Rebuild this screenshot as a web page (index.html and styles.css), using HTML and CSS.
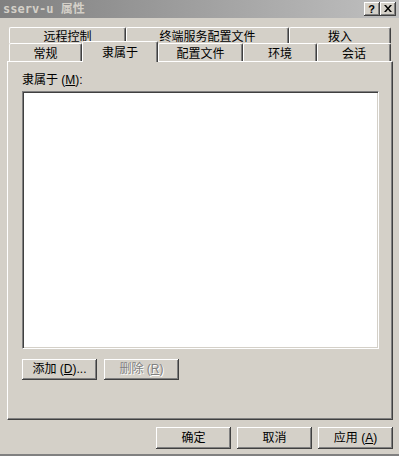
FILE: index.html
```html
<!DOCTYPE html>
<html lang="zh-CN">
<head>
<meta charset="utf-8">
<title>sserv-u 属性</title>
<link rel="stylesheet" href="styles.css">
</head>
<body>
<div class="window">
  <div class="titlebar">
    <span class="title">sserv-u 属性</span>
    <div class="caption-btns">
      <span class="cbtn cbtn-help">?</span>
      <span class="cbtn cbtn-close"><svg width="8" height="7" viewBox="0 0 8 7"><path d="M0 0h2l2 2.5 2-2.5h2l-3 3.5 3 3.5h-2l-2-2.5-2 2.5h-2l3-3.5z" fill="#000"/></svg></span>
    </div>
  </div>
  <div class="client">
    <div class="tabs">
      <div class="tabrow row1">
        <div class="tab w-remote">远程控制</div>
        <div class="tab w-ts">终端服务配置文件</div>
        <div class="tab w-dial">拨入</div>
      </div>
      <div class="tabrow row2">
        <div class="tab w-general">常规</div>
        <div class="tab tab-active w-member">隶属于</div>
        <div class="tab w-profile">配置文件</div>
        <div class="tab w-env">环境</div>
        <div class="tab w-session">会话</div>
      </div>
    </div>
    <div class="panel">
      <div class="label">隶属于 (<u>M</u>):</div>
      <div class="listbox"></div>
      <div class="panel-btns">
        <div class="btn">添加 (<u>D</u>)...</div>
        <div class="btn btn-disabled">删除 (<u>R</u>)</div>
      </div>
    </div>
    <div class="dlg-btns">
      <div class="btn">确定</div>
      <div class="btn">取消</div>
      <div class="btn">应用 (<u>A</u>)</div>
    </div>
  </div>
</div>
</body>
</html>
```
FILE: styles.css
```css
html, body {
  margin: 0;
  padding: 0;
  background: #d4d0c8;
}
body {
  font-family: "Liberation Sans", "Noto Sans CJK SC", sans-serif;
  font-size: 12px;
  color: #000;
}
.window {
  width: 399px;
  height: 456px;
  box-sizing: border-box;
  border-bottom: 2px solid #808080;
  display: flex;
  flex-direction: column;
  overflow: hidden;
}
.titlebar {
  height: 18px;
  flex: none;
  background: linear-gradient(to right, #808080, #c0c0c0);
  display: flex;
  align-items: center;
  justify-content: space-between;
  padding: 0 3px 0 3px;
}
.title {
  font-family: "DejaVu Sans Mono", "Noto Sans CJK SC", monospace;
  font-weight: bold;
  font-size: 12px;
  color: #d4d0c8;
  line-height: 18px;
}
.caption-btns {
  display: flex;
}
.cbtn {
  width: 16px;
  height: 14px;
  box-sizing: border-box;
  background: #d4d0c8;
  box-shadow: inset -1px -1px #404040, inset 1px 1px #ffffff, inset -2px -2px #808080;
  display: flex;
  align-items: center;
  justify-content: center;
  font-weight: bold;
  font-size: 11px;
  line-height: 12px;
  font-family: "Liberation Sans", sans-serif;
}
.cbtn-help {
  padding: 0 1px 1px 0;
}
.cbtn-close svg {
  display: block;
  margin: 0 1px 1px 0;
}
.client {
  padding: 9px 0 0 7px;
}
.tabs {
  margin-left: 2px;
  width: 382px;
}
.tabrow {
  display: flex;
  align-items: flex-start;
}
.row1 {
  height: 16px;
}
.row2 {
  height: 18px;
}
.tab {
  box-sizing: border-box;
  flex: none;
  border-top: 1px solid #ffffff;
  border-left: 1px solid #ffffff;
  border-right: 1px solid #404040;
  border-radius: 2px 2px 0 0;
  box-shadow: inset -1px 0 #808080;
  background: #d4d0c8;
  text-align: center;
  line-height: 14px;
  padding-top: 3px;
}
.row1 .tab {
  height: 16px;
  padding-top: 2px;
}
.row2 .tab {
  height: 18px;
}
.row2 .tab-active {
  position: relative;
  z-index: 1;
  height: 21px;
  margin-top: -2px;
  padding-top: 4px;
}
.w-remote { width: 117px; }
.w-ts { width: 163px; }
.w-dial { width: 102px; }
.w-general { width: 73px; }
.w-member { width: 76px; }
.w-profile { width: 85px; }
.w-env { width: 74px; }
.w-session { width: 74px; }
.panel {
  width: 386px;
  height: 359px;
  box-sizing: border-box;
  border-top: 1px solid #ffffff;
  border-left: 1px solid #ffffff;
  border-right: 1px solid #404040;
  border-bottom: 1px solid #404040;
  box-shadow: inset -1px -1px #808080;
  padding: 11px 0 0 14px;
}
.label {
  height: 14px;
  line-height: 14px;
  margin-bottom: 4px;
}
.listbox {
  width: 357px;
  height: 258px;
  box-sizing: border-box;
  background: #ffffff;
  border-top: 1px solid #808080;
  border-left: 1px solid #808080;
  border-right: 1px solid #ffffff;
  border-bottom: 1px solid #ffffff;
  box-shadow: inset 1px 1px #404040, inset -1px -1px #d4d0c8;
}
.panel-btns {
  display: flex;
  gap: 7px;
  margin-top: 10px;
}
.btn {
  width: 75px;
  height: 21px;
  box-sizing: border-box;
  background: #d4d0c8;
  box-shadow: inset -1px -1px #404040, inset 1px 1px #ffffff, inset -2px -2px #808080;
  display: flex;
  align-items: center;
  justify-content: center;
  line-height: 14px;
  padding-bottom: 1px;
  white-space: pre;
}
.btn-disabled {
  color: #808080;
  text-shadow: 1px 1px #ffffff;
}
.dlg-btns {
  width: 386px;
  display: flex;
  justify-content: flex-end;
  gap: 6px;
  margin-top: 7px;
}
.dlg-btns .btn {
  height: 22px;
}
```
